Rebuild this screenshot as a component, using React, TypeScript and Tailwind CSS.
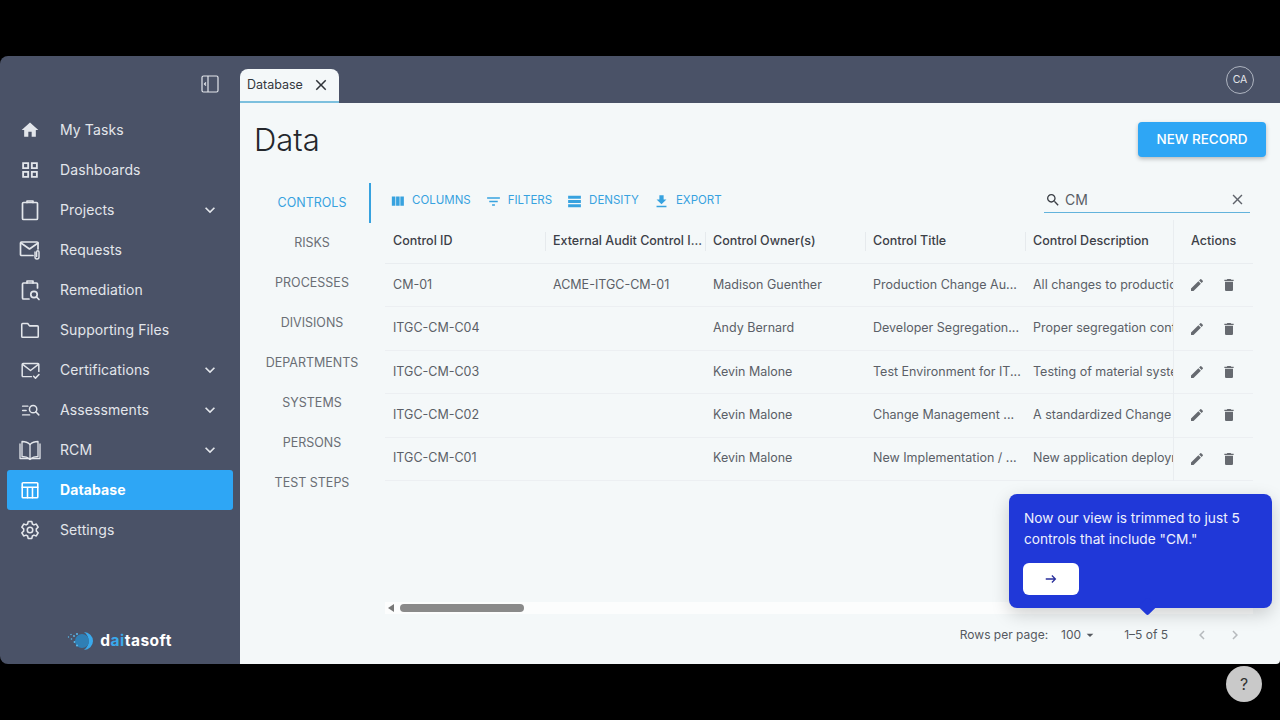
import type { ReactNode } from 'react';

const FONT = 'font-["Inter","Liberation_Sans",sans-serif]';

function Icon({ d, className = 'w-5 h-5' }: { d: string; className?: string }) {
  return (
    <svg viewBox="0 0 24 24" fill="currentColor" className={className}>
      <path d={d} />
    </svg>
  );
}

function Line({ children, className = 'w-6 h-6' }: { children: ReactNode; className?: string }) {
  return (
    <svg viewBox="0 0 24 24" fill="none" stroke="currentColor" strokeWidth="1.7" strokeLinejoin="round" strokeLinecap="round" className={className}>
      {children}
    </svg>
  );
}

const icons: Record<string, ReactNode> = {
  tasks: <Icon className="w-[20px] h-[20px]" d="M10 20v-6h4v6h5v-8h3L12 3 2 12h3v8z" />,
  dash: <Icon className="w-[22px] h-[22px]" d="M3.5 3.5V11H11V3.5H3.5zM9 9H5.5V5.5H9V9zM3.5 13v7.5H11V13H3.5zM9 18.5H5.5V15H9v3.5zM13 3.5V11h7.5V3.5H13zM18.5 9H15V5.5h3.5V9zM13 13v7.5h7.5V13H13zm5.5 5.5H15V15h3.5v3.5z" />,
  projects: (
    <Line>
      <rect x="4.5" y="4.5" width="15" height="17" rx="1" />
      <path d="M9 4.5V3h6v1.5" />
    </Line>
  ),
  requests: (
    <Line>
      <path d="M15 17.5H3.5a1 1 0 0 1-1-1V5a1 1 0 0 1 1-1H19a1 1 0 0 1 1 1v6" />
      <path d="M3 5l8.5 6L20 5" />
      <path d="M17 14v5a2 2 0 0 0 4 0v-5a1.2 1.2 0 0 0-2.4 0v4.5" strokeWidth="1.4" />
    </Line>
  ),
  remediation: (
    <Line>
      <path d="M11 21H5.5a1 1 0 0 1-1-1V6a1 1 0 0 1 1-1h13a1 1 0 0 1 1 1v4" />
      <path d="M9 5V3h6v2" />
      <circle cx="16" cy="16.5" r="3.2" />
      <path d="M18.5 19l2.5 2.5" />
    </Line>
  ),
  files: (
    <Line className="w-[22px] h-[22px]">
      <path d="M3 6a1 1 0 0 1 1-1h5.5l2 2.5H20a1 1 0 0 1 1 1V19a1 1 0 0 1-1 1H4a1 1 0 0 1-1-1V6z" />
    </Line>
  ),
  certs: (
    <Line className="w-[21px] h-[21px]">
      <path d="M13 19H3.5a1 1 0 0 1-1-1V5a1 1 0 0 1 1-1h17a1 1 0 0 1 1 1v8" />
      <path d="M3 5l9 7 9-7" />
      <path d="M15.5 18.5l2.2 2.2 4-4.200" />
    </Line>
  ),
  assess: (
    <Line className="w-[21px] h-[21px]">
      <path d="M3 7h6M3 12h4M3 17h8" />
      <circle cx="15" cy="10.5" r="4.2" />
      <path d="M18 13.5l3.5 3.5" />
    </Line>
  ),
  rcm: (
    <Line className="w-[24px] h-[24px]">
      <path d="M12 6.5C10 4.5 7 3.5 4 3.5v15c3 0 6 1 8 2.5 2-1.5 5-2.5 8-2.5v-15c-3 0-6 1-8 3z" strokeWidth="1.3" />
      <path d="M12 6.5V21M2 6v14.5h8l2 1 2-1h8V6" strokeWidth="1.3" />
    </Line>
  ),
  database: (
    <Line className="w-[22px] h-[22px]">
      <rect x="3.5" y="4" width="17" height="16.5" rx="1" />
      <path d="M3.5 9h17M9.3 9v11.5M14.7 9v11.5" />
    </Line>
  ),
  settings: (
    <Line className="w-[22px] h-[22px]">
      <path d="M10 2.8h4l.6 2.7 1.7.9 2.6-.9 2 3.5-2 1.8v2.4l2 1.8-2 3.5-2.6-.9-1.7.9-.6 2.7h-4l-.6-2.7-1.7-.9-2.6.9-2-3.5 2-1.8v-2.4l-2-1.8 2-3.5 2.6.9 1.7-.9z" />
      <circle cx="12" cy="12" r="3" />
    </Line>
  ),
};

const expand = 'M16.59 8.59 12 13.17 7.41 8.59 6 10l6 6 6-6z';
const clear = 'M19 6.41 17.59 5 12 10.59 6.41 5 5 6.41 10.59 12 5 17.59 6.41 19 12 13.41 17.59 19 19 17.59 13.41 12z';

const nav = [
  { key: 'tasks', label: 'My Tasks' },
  { key: 'dash', label: 'Dashboards' },
  { key: 'projects', label: 'Projects', more: true },
  { key: 'requests', label: 'Requests' },
  { key: 'remediation', label: 'Remediation' },
  { key: 'files', label: 'Supporting Files' },
  { key: 'certs', label: 'Certifications', more: true },
  { key: 'assess', label: 'Assessments', more: true },
  { key: 'rcm', label: 'RCM', more: true },
  { key: 'database', label: 'Database', active: true },
  { key: 'settings', label: 'Settings' },
];

const tabs = ['CONTROLS', 'RISKS', 'PROCESSES', 'DIVISIONS', 'DEPARTMENTS', 'SYSTEMS', 'PERSONS', 'TEST STEPS'];

const tools = [
  { label: 'COLUMNS', d: 'M10 18h5V5h-5v13zm-6 0h5V5H4v13zM16 5v13h5V5h-5z' },
  { label: 'FILTERS', d: 'M10 18h4v-2h-4v2zM3 6v2h18V6H3zm3 7h12v-2H6v2z' },
  { label: 'DENSITY', d: 'M21 8H3V4h18v4zm0 2H3v4h18v-4zm0 6H3v4h18v-4z' },
  { label: 'EXPORT', d: 'M19 9h-4V3H9v6H5l7 7 7-7zM5 18v2h14v-2H5z' },
];

const headers = ['Control ID', 'External Audit Control I...', 'Control Owner(s)', 'Control Title', 'Control Description'];

const rows = [
  ['CM-01', 'ACME-ITGC-CM-01', 'Madison Guenther', 'Production Change Au...', 'All changes to production systems'],
  ['ITGC-CM-C04', '', 'Andy Bernard', 'Developer Segregation...', 'Proper segregation controls exist'],
  ['ITGC-CM-C03', '', 'Kevin Malone', 'Test Environment for IT...', 'Testing of material systems is done'],
  ['ITGC-CM-C02', '', 'Kevin Malone', 'Change Management ...', 'A standardized Change process'],
  ['ITGC-CM-C01', '', 'Kevin Malone', 'New Implementation / ...', 'New application deployments are'],
];

function Sidebar() {
  return (
    <aside className="w-[240px] shrink-0 bg-[#4a5267] rounded-l-lg flex flex-col text-[#e3e6eb]">
      <div className="h-[54px] flex items-center justify-end pr-[21px] pt-[2px]">
        <svg viewBox="0 0 18 18" fill="none" stroke="currentColor" strokeWidth="1.2" className="w-[18px] h-[18px]">
          <rect x="1" y="1" width="16" height="16" rx="1.5" />
          <path d="M7 1v16M5 7.5 3.5 9 5 10.5" />
        </svg>
      </div>
      <nav className="flex flex-col">
        {nav.map((item) => (
          <div
            key={item.label}
            className={`h-10 mx-[7px] pl-[11px] pr-[13px] flex items-center rounded-[3px] ${item.active ? 'bg-[#2ea6f5] text-white font-bold' : ''}`}
          >
            <span className="w-[24px] flex justify-center">{icons[item.key]}</span>
            <span className="ml-[18px] pb-[2px] flex-1 text-[14px] tracking-[0.1px]">{item.label}</span>
            {item.more && <Icon d={expand} className="w-5 h-5" />}
          </div>
        ))}
      </nav>
      <div className="mt-auto h-[46px] flex items-center justify-center pr-[1px]">
        <svg viewBox="0 0 30 20" className="w-[30px] h-[20px]">
          <path d="M17 1a9 9 0 0 1 0 18 11 11 0 0 0 0-18z" fill="#3aa9ec" />
          <circle cx="15" cy="10" r="7" fill="#2f7fb5" />
          <g fill="#59bdf0">
            <circle cx="1.5" cy="6" r=".7" />
            <circle cx="4" cy="3.5" r=".7" />
            <circle cx="4.5" cy="8" r=".8" />
            <circle cx="7" cy="5" r=".9" />
            <circle cx="7.5" cy="11" r=".9" />
            <circle cx="10" cy="3" r="1" />
            <circle cx="10" cy="14.5" r="1" />
          </g>
        </svg>
        <span className="ml-[3px] text-[15.5px] font-bold text-white tracking-[0.5px]">
          d<span className="text-[#3aa9ec]">ai</span>tasoft
        </span>
      </div>
    </aside>
  );
}

function DataGrid() {
  return (
    <div className="flex-1 min-w-0 flex flex-col">
      <div className="h-[36px] flex items-center pl-[18px] pr-[30px] text-[#37a2df]">
        <div className="flex items-center">
          {tools.map((t) => (
            <div key={t.label} className="flex items-center mr-[14px]">
              <Icon d={t.d} className="w-[17px] h-[17px]" />
              <span className="ml-[6px] text-[11.5px]">{t.label}</span>
            </div>
          ))}
        </div>
        <div className="ml-auto mb-[2px] w-[206px] h-[26px] border-b border-[#62b3dc] flex items-center text-[#3b3f46]">
          <Icon d="M15.5 14h-.79l-.28-.27C15.41 12.59 16 11.11 16 9.5 16 5.91 13.09 3 9.5 3S3 5.91 3 9.5 5.91 16 9.5 16c1.61 0 3.09-.59 4.23-1.57l.27.28v.79l5 4.99L20.49 19l-4.99-5zm-6 0C7.01 14 5 11.99 5 9.5S7.01 5 9.5 5 14 7.01 14 9.5 11.99 14 9.5 14z" className="w-[16px] h-[16px] ml-[1px]" />
          <span className="ml-[4px] flex-1 text-[14px] text-[#5a5e66]">CM</span>
          <Icon d={clear} className="w-[17px] h-[17px] mr-[4px] text-[#5f636b]" />
        </div>
      </div>
      <div className="ml-[14px] mr-[27px] mt-[1px] relative overflow-hidden">
        <div className="flex h-[44px] border-b border-[#e9edf0] text-[12.5px] font-medium text-[#3c4047]">
          {headers.map((h, i) => (
            <div key={h} className="w-[160px] shrink-0 flex items-center px-2 relative whitespace-nowrap">
              {h}
              {i > 0 && <span className="absolute left-0 top-[12px] h-[19px] w-px bg-[#e6eaed]" />}
            </div>
          ))}
        </div>
        {rows.map((r) => (
          <div key={r[0]} className="flex h-[43.4px] border-b border-[#eceff2] text-[12.5px] text-[#5b5f67]">
            {r.map((c, i) => (
              <div key={i} className="w-[160px] shrink-0 flex items-center px-2 whitespace-nowrap overflow-hidden">
                {c}
              </div>
            ))}
          </div>
        ))}
        <div className="absolute top-0 right-0 bottom-0 w-[80px] bg-[#f4f8f9] border-l border-[#e9edf0]">
          <div className="h-[44px] flex items-center pl-[17px] text-[12.5px] font-medium text-[#3c4047] border-b border-[#e9edf0]">Actions</div>
          {rows.map((r) => (
            <div key={r[0]} className="h-[43.4px] flex items-center pl-[15px] text-[#666a70] border-b border-[#eceff2]">
              <Icon d="M3 17.25V21h3.75L17.81 9.94l-3.75-3.75L3 17.25zM20.71 7.04c.39-.39.39-1.02 0-1.41l-2.34-2.34a.9959.9959 0 0 0-1.41 0l-1.83 1.83 3.75 3.75 1.83-1.83z" className="w-[16px] h-[16px]" />
              <Icon d="M6 19c0 1.1.9 2 2 2h8c1.1 0 2-.9 2-2V7H6v12zM19 4h-3.5l-1-1h-5l-1 1H5v2h14V4z" className="w-[16px] h-[16px] ml-[16px]" />
            </div>
          ))}
        </div>
      </div>
      <div className="mt-[121px] ml-[14px] mr-[27px] h-[12px] bg-white/70 flex items-center">
        <span className="ml-[3px] w-0 h-0 border-y-[4px] border-y-transparent border-r-[6px] border-r-[#777]" />
        <span className="ml-[6px] w-[124px] h-[8px] rounded bg-[#8a8a8a]" />
      </div>
      <div className="h-[42px] flex items-center justify-end pr-[36px] text-[12px] text-[#55595f]">
        <span>Rows per page:</span>
        <span className="ml-[13px]">100</span>
        <Icon d="m7 10 5 5 5-5z" className="w-[16px] h-[16px] ml-[1px]" />
        <span className="ml-[26px]">1–5 of 5</span>
        <Icon d="M15.41 7.41 14 6l-6 6 6 6 1.41-1.41L10.83 12z" className="w-[18px] h-[18px] ml-[25px] text-[#b6babd]" />
        <Icon d="M10 6 8.59 7.41 13.17 12l-4.58 4.59L10 18l6-6z" className="w-[18px] h-[18px] ml-[15px] text-[#b6babd]" />
      </div>
    </div>
  );
}

export default function App() {
  return (
    <div className={`relative w-[1280px] h-[720px] bg-black pt-[56px] overflow-hidden ${FONT}`}>
      <div className="flex h-[608px] rounded-br">
        <Sidebar />
        <div className="flex-1 min-w-0 flex flex-col rounded-br overflow-hidden">
          <header className="h-[47px] shrink-0 bg-[#4a5267] flex items-end justify-between">
            <div className="w-[99px] h-[34px] bg-[#f4f8f9] rounded-t-lg border-b-2 border-[#7cc0de] flex items-center pl-[7px] text-[#33373d]">
              <span className="text-[12.5px]">Database</span>
              <Icon d={clear} className="w-[18px] h-[18px] ml-[9px] text-[#2f3338]" />
            </div>
            <div className="self-center mr-[26px] w-[28px] h-[28px] rounded-full border border-[#aeb4c0] flex items-center justify-center text-[10.5px] text-[#e3e6eb]">CA</div>
          </header>
          <main className="flex-1 min-h-0 bg-[#f4f8f9] flex flex-col">
            <div className="h-[80px] shrink-0 flex justify-between pl-[14px] pr-[14px]">
              <h1 className="mt-[17px] text-[31px] font-light leading-[40px] text-[#24272c]">Data</h1>
              <button className="mt-[19px] w-[128px] h-[35px] rounded-[4px] bg-[#2ea6f5] shadow-[0_2px_4px_rgba(0,0,0,0.25)] text-white text-[13.5px] font-medium">NEW RECORD</button>
            </div>
            <div className="flex-1 min-h-0 flex">
              <div className="w-[131px] shrink-0 flex flex-col items-stretch">
                {tabs.map((t, i) => (
                  <div
                    key={t}
                    className={`h-10 ml-[15px] flex items-center justify-center text-[12.5px] ${i === 0 ? 'text-[#37a2df] border-r-2 border-[#37a2df]' : 'text-[#6a6e75] border-r-2 border-transparent'}`}
                  >
                    {t}
                  </div>
                ))}
              </div>
              <DataGrid />
            </div>
          </main>
        </div>
      </div>

      {/* product tour tooltip */}
      <div className="absolute left-[1009px] top-[494px] w-[263px] h-[114px] rounded-lg bg-[#2038d8] shadow-[0_6px_18px_rgba(0,0,0,0.18)] pl-[14px] pt-[14px] text-[#eef0fd]">
        <p className="text-[13.7px] leading-[21px] w-[240px] pl-[1px]">Now our view is trimmed to just 5 controls that include "CM."</p>
        <div className="mt-[13px] w-[56px] h-[32px] rounded-[6px] bg-white flex items-center justify-center text-[#2a2f9c]">
          <svg viewBox="0 0 16 16" fill="none" stroke="currentColor" strokeWidth="1.5" className="w-[14px] h-[14px]">
            <path d="M2 8h11M9 4l4 4-4 4" />
          </svg>
        </div>
        <span className="absolute left-[132px] top-[106px] w-[13px] h-[13px] rotate-45 bg-[#2038d8] rounded-[2px]" />
      </div>

      <div className="absolute left-[1226px] top-[666px] w-[36px] h-[36px] rounded-full bg-[#c9c9c9] flex items-center justify-center text-[16px] text-[#333]">?</div>
    </div>
  );
}
